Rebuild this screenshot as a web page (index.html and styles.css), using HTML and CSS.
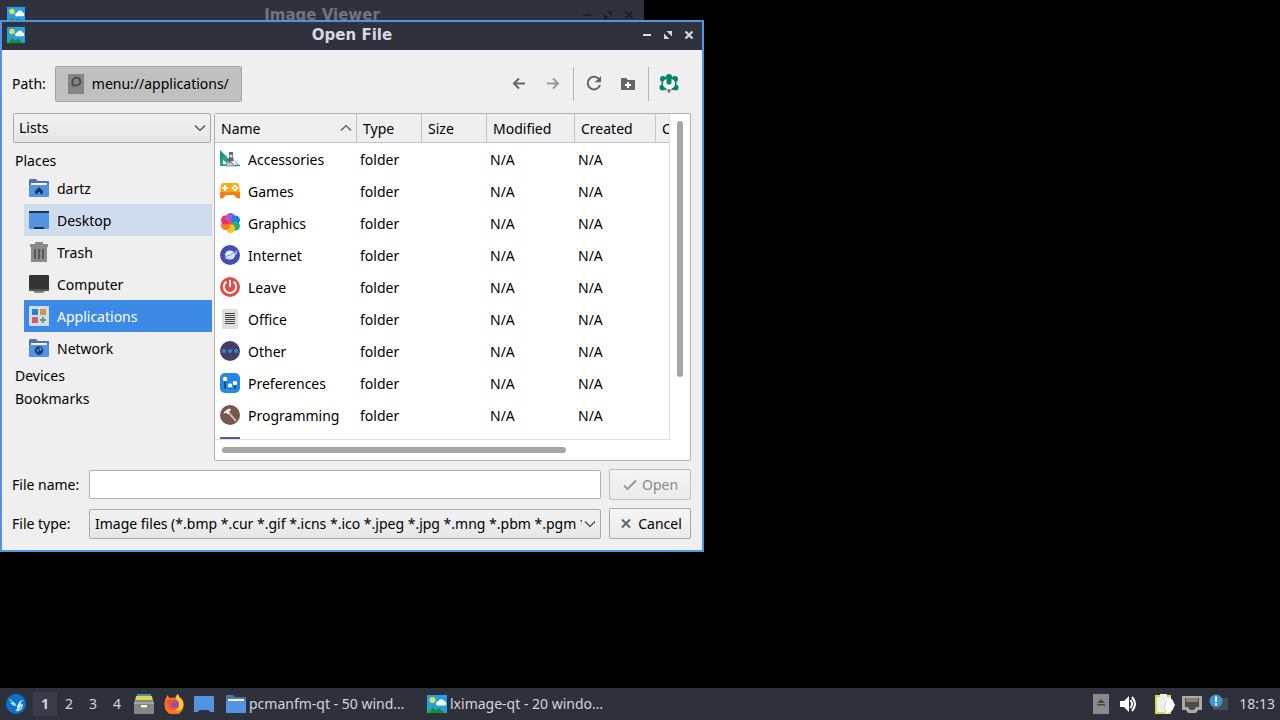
FILE: index.html
```html
<!DOCTYPE html>
<html lang="en">
<head>
<meta charset="utf-8">
<title>Open File</title>
<link rel="stylesheet" href="styles.css">
</head>
<body>
<svg class="defs" aria-hidden="true">
  <defs>
    <symbol id="i-image" viewBox="0 0 20 18"><rect width="20" height="18" fill="#24a0e8"/><circle cx="5.500" cy="5" r="3" fill="#e5e04e"/><path d="M10 10.500a2.300 2.300 0 0 1 1.200-4.200 3.300 3.300 0 0 1 6.200 0A2.200 2.200 0 0 1 18 10.500z" fill="#fff"/><path d="M0 16l5.500-5 4 4 3-2 7.500 5H0z" fill="#35a867"/><path d="M2 18l4-5.500 3 3 3-2.500 5 5z" fill="#148b48"/></symbol>
    <symbol id="i-folder" viewBox="0 0 20 20"><path d="M0 2q0-1 1-1h6l2 2h10q1 0 1 1v6H0z" fill="#5273a8"/><path d="M2 5h16v4H2z" fill="#f2f5fa"/><path d="M0 7h20v11q0 1-1 1H1q-1 0-1-1z" fill="#5294e2"/></symbol>
    <symbol id="i-min" viewBox="0 0 10 10"><path d="M1 4h8v2H1z" fill="currentColor"/></symbol>
    <symbol id="i-max" viewBox="0 0 10 10"><path d="M3.500 1H9v5.500zM1 3.500V9h5.500z" fill="currentColor"/></symbol>
    <symbol id="i-close" viewBox="0 0 10 10"><path d="M1.500 1.500l7 7m0-7l-7 7" stroke="currentColor" stroke-width="2.200"/></symbol>
    <symbol id="i-chev" viewBox="0 0 12 8"><path d="M1 1.500l5 5 5-5" fill="none" stroke="#444" stroke-width="1.200"/></symbol>
  </defs>
</svg>

<main class="desktop">
  <section class="window viewer" aria-label="Image Viewer">
    <header class="titlebar">
      <svg class="app-icon"><use href="#i-image"/></svg>
      <h2 class="title">Image Viewer</h2>
      <div class="controls">
        <button aria-label="Minimize"><svg><use href="#i-min"/></svg></button>
        <button aria-label="Maximize"><svg><use href="#i-max"/></svg></button>
        <button aria-label="Close"><svg><use href="#i-close"/></svg></button>
      </div>
    </header>
  </section>

  <section class="window dialog" aria-label="Open File">
    <header class="titlebar">
      <svg class="app-icon"><use href="#i-image"/></svg>
      <h1 class="title">Open File</h1>
      <div class="controls">
        <button aria-label="Minimize"><svg><use href="#i-min"/></svg></button>
        <button aria-label="Maximize"><svg><use href="#i-max"/></svg></button>
        <button aria-label="Close"><svg><use href="#i-close"/></svg></button>
      </div>
    </header>

    <div class="content">
      <div class="toolbar">
        <span>Path:</span>
        <button class="path-button">
          <svg viewBox="0 0 16 20" width="16" height="20"><rect width="16" height="20" fill="#858585"/><path d="M4.500 11.500V7.500A3.900 3.900 0 1 1 8.400 11.400H4" fill="none" stroke="#4b4b4b" stroke-width="1.900"/></svg>
          menu://applications/
        </button>
        <div class="tools">
          <div class="tool-group">
            <button aria-label="Back"><svg viewBox="0 0 20 20"><path d="M16 9.500H5.500m4.500-5L5 9.500l5 5" fill="none" stroke="#666" stroke-width="2"/></svg></button>
            <button aria-label="Forward" disabled><svg viewBox="0 0 20 20"><path d="M4 9.500h10.500m-4.500-5l5 5-5 5" fill="none" stroke="#999" stroke-width="2"/></svg></button>
          </div>
          <div class="tool-group">
            <button aria-label="Reload"><svg viewBox="0 0 20 20"><path d="M15.500 6A6.300 6.300 0 1 0 16 11" fill="none" stroke="#666" stroke-width="2"/><path d="M17 2v6.300h-6.300z" fill="#666"/></svg></button>
            <button aria-label="New folder"><svg viewBox="0 0 20 20"><path d="M3 4h5l2 2h7v10H3z" fill="#666"/><path d="M10 8v6m-3-3h6" stroke="#fff" stroke-width="2"/></svg></button>
          </div>
          <div class="tool-group">
            <button aria-label="View options"><svg viewBox="0 0 20 20"><g fill="#078568"><circle cx="10" cy="3" r="3"/><circle cx="4" cy="5" r="3"/><circle cx="16" cy="5" r="3"/><circle cx="3.500" cy="13.500" r="3"/><circle cx="16.500" cy="13.500" r="3"/><circle cx="10" cy="9.500" r="7.500"/></g><path d="M7.500 5A5 5 0 0 0 7.500 14.500v2h5v-2A5 5 0 0 0 12.500 5v4.500L10 11 7.500 9.500z" fill="#fff"/><path d="M8.500 15h3v3L10 19.500 8.500 18z" fill="#aaa"/><path d="M10 15v3.500" stroke="#444"/></svg></button>
          </div>
        </div>
      </div>

      <div class="panes">
        <nav class="sidebar" aria-label="Places">
          <div class="combo">
            <select aria-label="Sidebar view"><option>Lists</option></select>
            <svg class="chevron"><use href="#i-chev"/></svg>
          </div>
          <div class="tree">
            <h3>Places</h3>
            <button class="place"><svg viewBox="0 0 20 20"><use href="#i-folder"/><path d="M6 13l4-4 4 4v3h-3v-2H9v2H6z" fill="#163a63"/></svg>dartz</button>
            <button class="place hovered"><svg viewBox="0 0 20 20"><rect y="1" width="20" height="18" rx="1" fill="#5294e2"/><path d="M0 1h20v2H0zm5 16h10v2H5z" fill="#1c345c"/></svg>Desktop</button>
            <button class="place"><svg viewBox="0 0 20 20"><path d="M1 2h5V0h8v2h5v3H1zm1 3h16v15H2z" fill="#8b8b8b"/><path d="M6 7v10m4-10v10m4-10v10" stroke="#555" stroke-width="1.800"/></svg>Trash</button>
            <button class="place"><svg viewBox="0 0 20 20"><rect y="1" width="20" height="16" rx="1" fill="#343434"/><path d="M0 15h20v1q0 1-1 1H1q-1 0-1-1z" fill="#555"/><path d="M4 17h12l-2 2H6z" fill="#888"/></svg>Computer</button>
            <button class="place selected"><svg viewBox="0 0 20 20"><rect width="20" height="20" rx="1" fill="#d5dbe5"/><path d="M3 3h6v6H3z" fill="#2684c8"/><path d="M11 3h6v6h-6z" fill="#cb964e"/><path d="M3 11h6v6H3z" fill="#d15b74"/><path d="M14 11v6m-3-3h6" stroke="#46a876" stroke-width="1.800"/></svg>Applications</button>
            <button class="place"><svg viewBox="0 0 20 20"><use href="#i-folder"/><circle cx="10" cy="12.500" r="4.200" fill="#183b67"/><path d="M7 11l3 1-1 3zm4-2l2 2-1 2-2-2z" fill="#5294e2"/></svg>Network</button>
            <h3>Devices</h3>
            <h3>Bookmarks</h3>
          </div>
        </nav>

        <div class="files">
          <div class="file-view">
            <table>
              <colgroup><col class="c-name"><col class="c-type"><col class="c-size"><col class="c-mod"><col class="c-created"><col class="c-rest"></colgroup>
              <thead><tr><th><span class="sorted">Name <svg viewBox="0 0 12 8"><path d="M1 6.500l5-5 5 5" fill="none" stroke="#555" stroke-width="1.200"/></svg></span></th><th>Type</th><th>Size</th><th>Modified</th><th>Created</th><th>C</th></tr></thead>
              <tbody>
                <tr><td><span class="file"><svg viewBox="0 0 20 20"><path d="M0 1l7 7v9H0z" fill="#169880"/><path d="M5 6l7 8-5 3H0v-3z" fill="#2ba58f"/><path d="M3 11l5 4H3z" fill="#fff"/><path d="M9 3h4v5l1 4-5 1-2-3 2-1z" fill="#606873"/><circle cx="11" cy="7" r="1.600" fill="#d9dde2"/><path d="M7 13l5 1 3 3H6zm8-1l4 5" stroke="#8c979e" stroke-width="1.200" fill="#c3cbd0"/><path d="M15 16.500h5" stroke="#16a085" stroke-width="1.500"/></svg>Accessories</span></td><td>folder</td><td></td><td>N/A</td><td>N/A</td><td></td></tr>
                <tr><td><span class="file"><svg viewBox="0 0 20 20"><path d="M3 2h14q2.500 1 2.500 5l.5 9q-1 3-4 0l-2-2H6l-2 2q-3 3-4 0l.5-9Q.5 3 3 2z" fill="#fba91b"/><path d="M0 11h20v5q-1 3-4 0l-2-2H6l-2 2q-3 3-4 0z" fill="#ee801c"/><path d="M5 4v6M2 7h6" stroke="#fff" stroke-width="2"/><path d="M15 4.500l2.500 2.500L15 9.500 12.500 7z" fill="none" stroke="#fff" stroke-width="1.500"/></svg>Games</span></td><td>folder</td><td></td><td>N/A</td><td>N/A</td><td></td></tr>
                <tr><td><span class="file"><svg viewBox="0 0 20 20"><circle cx="10.500" cy="4.500" r="4.500" fill="#7c61e8"/><circle cx="15.500" cy="7" r="4.500" fill="#1583df"/><circle cx="15.500" cy="13" r="4.500" fill="#26ae76"/><circle cx="10.500" cy="15.500" r="4.500" fill="#fac21d"/><circle cx="5.500" cy="12.500" r="4.500" fill="#f77d22"/><circle cx="5.500" cy="7" r="4.500" fill="#ee3157"/><path d="M10 10L4 5q4-6 8-2z" fill="#c850bd"/><circle cx="10.500" cy="10" r="1.800" fill="#e5554c"/></svg>Graphics</span></td><td>folder</td><td></td><td>N/A</td><td>N/A</td><td></td></tr>
                <tr><td><span class="file"><svg viewBox="0 0 20 20"><circle cx="10" cy="10" r="10" fill="#424db5"/><ellipse cx="10" cy="10" rx="5" ry="4.500" fill="#e6f1ff"/><path d="M4 13q4 .5 8-2t5-6q1.500 2-2 5.500Q9 15.500 4 13z" fill="#bddcfa"/><path d="M4.500 11.500q6 0 10.500-5" fill="none" stroke="#6f8fd8"/></svg>Internet</span></td><td>folder</td><td></td><td>N/A</td><td>N/A</td><td></td></tr>
                <tr><td><span class="file"><svg viewBox="0 0 20 20"><circle cx="10" cy="10" r="10" fill="#e54b45"/><path d="M6.500 4.700a6.200 6.200 0 1 0 7 0M10 3v7" fill="none" stroke="#fff" stroke-width="2"/></svg>Leave</span></td><td>folder</td><td></td><td>N/A</td><td>N/A</td><td></td></tr>
                <tr><td><span class="file"><svg viewBox="0 0 20 20"><rect x="2" width="16" height="20" rx="1" fill="#e0e0dd"/><path d="M5 4.500h10m-10 2h10m-10 2h10m-10 2h10m-10 2h10m-10 2h10" stroke="#444"/></svg>Office</span></td><td>folder</td><td></td><td>N/A</td><td>N/A</td><td></td></tr>
                <tr><td><span class="file"><svg viewBox="0 0 20 20"><circle cx="10" cy="10" r="10" fill="#443f61"/><g fill="#278be5"><circle cx="4" cy="10" r="2"/><circle cx="10" cy="10" r="2"/><circle cx="16" cy="10" r="2"/></g></svg>Other</span></td><td>folder</td><td></td><td>N/A</td><td>N/A</td><td></td></tr>
                <tr><td><span class="file"><svg viewBox="0 0 20 20"><rect width="20" height="20" rx="5" fill="#2389e2"/><path d="M5 5v11m5-6v6m5-9v9" stroke="#14558f" stroke-width="2"/><g fill="#fff"><circle cx="5" cy="6" r="2.200"/><circle cx="10" cy="12.500" r="2.200"/><circle cx="15" cy="10" r="2.200"/></g></svg>Preferences</span></td><td>folder</td><td></td><td>N/A</td><td>N/A</td><td></td></tr>
                <tr><td><span class="file"><svg viewBox="0 0 20 20"><circle cx="10" cy="10" r="10" fill="#75574b"/><path d="M8 7l8 9" stroke="#d2b3a6" stroke-width="2"/><path d="M3.500 9Q4 5 10 3.500l1 1.800-2 1 .5 1.700-2 1.200-1.500-1.700z" fill="#fff"/></svg>Programming</span></td><td>folder</td><td></td><td>N/A</td><td>N/A</td><td></td></tr>
                <tr><td><span class="file"><svg viewBox="0 0 20 20"><rect width="20" height="20" fill="#5a5d91"/></svg></span></td><td></td><td></td><td></td><td></td><td></td></tr>
              </tbody>
            </table>
          </div>
          <div class="track-v"><div class="thumb"></div></div>
          <div class="track-h"><div class="thumb"></div></div>
        </div>
      </div>

      <form class="fields">
        <label for="filename">File name:</label>
        <input id="filename" type="text">
        <button class="action" type="button" disabled><svg viewBox="0 0 16 16"><path d="M2 8.500l3.500 3.500L14 3.500" fill="none" stroke="#999" stroke-width="2"/></svg>Open</button>
        <label for="filetype">File type:</label>
        <div class="combo">
          <select id="filetype"><option>Image files (*.bmp *.cur *.gif *.icns *.ico *.jpeg *.jpg *.mng *.pbm *.pgm *.png)</option></select>
          <svg class="chevron"><use href="#i-chev"/></svg>
        </div>
        <button class="action" type="button"><svg viewBox="0 0 16 16"><path d="M4 3.500l8 8m0-8l-8 8" stroke="#666" stroke-width="2"/></svg>Cancel</button>
      </form>
    </div>
  </section>
</main>

<footer class="panel">
  <button class="launcher start" aria-label="Applications menu"><svg viewBox="0 0 20 20"><circle cx="10" cy="10" r="10" fill="#0873d0"/><path d="M2 4l7 5 1 3 2-1q1-5 6-5-4 1-3 5-1 5-6 6 3-2 2-5-5 0-7-4 2 1 4 1-4-2-6-5z" fill="#d9efff"/><path d="M11 17q6-2 5-7" fill="none" stroke="#fff" stroke-width="1.300"/></svg></button>
  <div class="pager"><button class="current">1</button><button>2</button><button>3</button><button>4</button></div>
  <div class="launchers">
    <button class="launcher" aria-label="File manager"><svg viewBox="0 0 20 20"><path d="M3 0h14v3H3z" fill="#38a3aa"/><path d="M2 2h16l1 5H1z" fill="#e6d15b"/><path d="M1 6h18l1 2v11q0 1-1 1H1q-1 0-1-1V8z" fill="#858782"/><path d="M0 8h20v2H0z" fill="#a2a39b"/><rect x="7" y="11" width="6" height="2.500" rx="1" fill="#fff"/></svg></button>
    <button class="launcher" aria-label="Firefox"><svg viewBox="0 0 20 20"><path d="M2 4l1-3 3 3q3-1 5 0 1-3 3-4 1 3 4 5 2 3 1.800 6.500A9.500 9.500 0 0 1 .5 11Q.3 7 2 4z" fill="#f67722"/><path d="M14 0q-3 3-2 5 3 2 3 6 0 4-5 5 7 3 9-4 1-5-3-8-2-2-2-4z" fill="#ffc63a"/><circle cx="10" cy="10.500" r="4.800" fill="#8052c5"/><path d="M2 8q3-4 8-2l2 2-4 1q-2 2 1 4 3 1 6-2-1 6-7 5-5-2-6-8z" fill="#f2513b"/></svg></button>
    <button class="launcher" aria-label="Show desktop"><svg viewBox="0 0 20 20"><path d="M0 3q0-1 1-1h18q1 0 1 1v15h-4l-1-2H5l-1 2H0z" fill="#5294e2"/></svg></button>
  </div>
  <div class="tasks">
    <button class="task"><svg><use href="#i-folder"/></svg>pcmanfm-qt - 50 wind…</button>
    <button class="task"><svg><use href="#i-image"/></svg>lximage-qt - 20 windo…</button>
  </div>
  <div class="tray">
    <button aria-label="Removable media"><svg viewBox="0 0 20 20"><rect x="2" width="16" height="20" fill="#8a8a8a"/><path d="M10 5l4 4H6zM6 10h8v1.500H6z" fill="#494949"/></svg></button>
    <button class="volume" aria-label="Volume"><svg viewBox="0 0 20 20"><path d="M2 7h4l5-5v16l-5-5H2z" fill="#fff"/><path d="M12.500 6q3 4 0 8M14 3q6 7 0 14" fill="none" stroke="#fff" stroke-width="2"/></svg></button>
    <button aria-label="Clipboard"><svg viewBox="0 0 20 20"><path d="M0 1h16v19H0z" fill="#d9d94b"/><path d="M2 3h14v15H2zM5 0h7v3H5z" fill="#f0f0ea"/><path d="M8 5h9l3 6-3 6-6 3-2-6z" fill="#fff"/><path d="M8 5l3 3-2 5 2 5" fill="none" stroke="#ccc"/></svg></button>
    <button aria-label="Network"><svg viewBox="0 0 20 20"><path d="M0 2h20v14h-4l-2 3H6l-2-3H0z" fill="#aaa9a5"/><path d="M3 4h14v9h-3l-2 3H8l-2-3H3z" fill="#4a4a48"/><path d="M5 4v4m2-4v4m2-4v4m2-4v4m2-4v4m2-4v4" stroke="#c5bc91"/></svg></button>
    <button aria-label="Updates"><svg viewBox="0 0 20 20"><path d="M4 4h15v12H4z" fill="#484d50"/><circle cx="7" cy="7" r="6.500" fill="#3899d8"/><path d="M7 2.500V8M7 9.300v2" stroke="#fff" stroke-width="2"/></svg></button>
    <time>18:13</time>
  </div>
</footer>
</body>
</html>
```
FILE: styles.css
```css
* { box-sizing: border-box; }

body {
  margin: 0;
  min-height: 100vh;
  display: flex;
  flex-direction: column;
  background: #000;
  color: #000;
  font: 14px/20px "Noto Sans", "Open Sans", sans-serif;
}

button, input, select { font: inherit; color: inherit; }
button { border: 0; padding: 0; background: none; }
svg { flex: none; display: block; }
h1, h2, h3 { margin: 0; font: inherit; }
.defs { position: absolute; width: 0; height: 0; }

.desktop { flex: 1; position: relative; overflow: hidden; }
.window { position: absolute; left: 0; }
.viewer { top: 0; width: calc(55% - 60px); }
.dialog { top: 20px; width: 55%; border: 2px solid #5294e2; background: #efefef; }

.titlebar {
  display: grid;
  grid-template-columns: 60px 1fr 60px;
  align-items: center;
  height: 28px;
  padding-bottom: 2px;
  background: #2f323d;
  color: #d3dae3;
}
.viewer .titlebar { height: 30px; padding: 0 2px; color: #70747f; }
.viewer .controls { color: #1c1f29; }
.app-icon { width: 18px; height: 18px; margin-left: 5px; }
.title {
  text-align: center;
  font: bold 15px/20px "DejaVu Sans", sans-serif;
}
.controls { display: flex; justify-content: flex-end; gap: 11px; padding-right: 8px; }
.controls svg { width: 10px; height: 10px; }

.content { padding: 16px 11px 11px 10px; }

.toolbar { display: flex; align-items: center; gap: 9px; height: 36px; }
.path-button {
  display: flex;
  align-items: center;
  gap: 8px;
  height: 36px;
  padding: 0 12px;
  border: 1px solid #a5a5a5;
  border-radius: 2px;
  background: #c0c0c0;
}
.tools { display: flex; margin-left: auto; padding-right: 2px; }
.tool-group { display: flex; align-items: center; gap: 14px; height: 34px; padding: 0 10px; }
.tool-group + .tool-group { border-left: 1px solid #b5b5b5; }
.tools svg { width: 20px; height: 20px; }

.panes { display: grid; grid-template-columns: 200px 1fr; gap: 2px; margin-top: 11px; }
.sidebar { padding-left: 1px; }
.sidebar .combo { margin-right: 1px; }
.combo { position: relative; }
.combo select {
  appearance: none;
  display: block;
  width: 100%;
  height: 30px;
  padding: 0 18px 0 5px;
  border: 1px solid #a9a9a9;
  border-radius: 2px;
  background: linear-gradient(#f2f2f2, #e6e6e6);
  color: #000;
}
.chevron { position: absolute; right: 5px; top: 11px; width: 12px; height: 8px; pointer-events: none; }

.tree { padding-top: 6px; }
.tree h3 { padding-left: 2px; line-height: 23px; }
.place {
  display: flex;
  align-items: center;
  gap: 8px;
  width: calc(100% - 11px);
  height: 32px;
  margin-left: 11px;
  padding: 2px 0 0 5px;
}
.place svg { width: 20px; height: 20px; margin-bottom: 2px; }
.hovered { background: #cfdcee; }
.selected { background: #3c89e6; color: #fff; }

.files {
  display: grid;
  grid-template-columns: 1fr 20px;
  grid-template-rows: 1fr 20px;
  height: 348px;
  min-width: 0;
  border: 1px solid #b2b2b2;
  border-radius: 2px;
  background: #fff;
}
.file-view { overflow: hidden; border: solid #e1e1e1; border-width: 0 1px 1px 0; }
table { width: 560px; table-layout: fixed; border-collapse: separate; border-spacing: 0; }
.c-name { width: 142px; }
.c-type, .c-size { width: 65px; }
.c-mod { width: 88px; }
.c-created { width: 81px; }
th {
  height: 29px;
  padding: 2px 4px 0 6px;
  border: solid #c4c4c4;
  border-width: 0 1px 1px 0;
  background: #efefef;
  text-align: left;
  font-weight: normal;
}
td { height: 32px; padding: 2px 0 0 3px; white-space: nowrap; }
td:first-child { padding-left: 5px; }
.sorted { display: flex; align-items: center; justify-content: space-between; }
.sorted svg { width: 12px; height: 8px; margin-bottom: 2px; }
.file { display: flex; align-items: center; gap: 8px; }
.file svg { width: 20px; height: 20px; margin-bottom: 2px; }
.track-v { padding: 7px; }
.track-h { padding: 7px; }
.thumb { border-radius: 3px; background: #a5a5a5; }
.track-v .thumb { width: 6px; height: 82%; }
.track-h .thumb { width: 78%; height: 6px; }

.fields {
  display: grid;
  grid-template-columns: 69px 1fr 82px;
  gap: 8px;
  align-items: center;
  margin-top: 8px;
}
.fields label { white-space: nowrap; }
.fields input {
  width: 100%;
  height: 29px;
  padding: 0 5px;
  border: 1px solid #b0b0b0;
  border-radius: 2px;
  background: #fff;
}
.action {
  display: flex;
  align-items: center;
  justify-content: center;
  gap: 4px;
  height: 31px;
  border: 1px solid #a9a9a9;
  border-radius: 2px;
  background: linear-gradient(#f4f4f4, #ebebeb);
}
.action svg { width: 16px; height: 16px; }
.action:disabled { color: #8b8b8b; border-color: #c0c0c0; }

.panel {
  display: flex;
  align-items: center;
  height: 32px;
  padding: 0 5px 0 6px;
  background: #2e313c;
  color: #d0d5df;
}
.panel svg { width: 20px; height: 20px; }
.pager { display: flex; margin: 0 5px 0 7px; }
.pager button { width: 24px; height: 24px; }
.pager .current { background: #3a3d49; font-weight: bold; }
.launchers { display: flex; gap: 10px; }
.tasks { display: flex; margin-left: 12px; gap: 1px; }
.task { display: flex; align-items: center; gap: 3px; width: 200px; white-space: nowrap; }
.tray { display: flex; align-items: center; gap: 7px; margin-left: auto; }
.tray svg { margin-bottom: 1px; }
.volume { margin-right: 10px; }
.tray time { margin-left: 3px; }
```
